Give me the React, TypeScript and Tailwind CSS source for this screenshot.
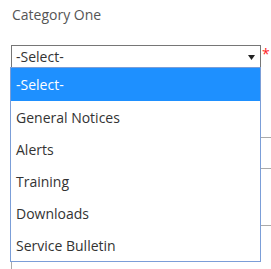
const options = [
  "-Select-",
  "General Notices",
  "Alerts",
  "Training",
  "Downloads",
  "Service Bulletin",
];

export default function App() {
  return (
    <div
      className="relative h-[269px] w-[271px] overflow-hidden bg-white text-[14px] text-[#333]"
      style={{ fontFamily: '"Open Sans", sans-serif' }}
    >
      {/* form behind the open list */}
      <div className="px-[12px] pt-[5px] leading-[20px] text-[#555]">Category One</div>
      <div className="ml-[11px] mt-[20px] flex w-[250px] items-center">
        <div className="flex h-[23px] w-[250px] shrink-0 items-center border border-[#767676] pl-[4px] pr-[5px] leading-[20px] text-[#333]">
          <span className="flex-1">-Select-</span>
          <svg width="7" height="5" viewBox="0 0 7 5" className="mt-[1px]">
            <path d="M0 0h7L3.5 5z" fill="#222" />
          </svg>
        </div>
        <span className="ml-[1px] mt-[-6px] text-[14px] leading-none text-[#f22]">*</span>
      </div>
      <div className="ml-[11px] mt-[69px] h-[32px] w-[300px] border border-[#aaa]" />
      <div className="ml-[11px] mt-[56px] h-[60px] w-[300px] border border-[#aaa]" />

      {/* open option list */}
      <ul className="absolute left-[10px] top-[67px] w-[251px] border border-[#7b9ed8] bg-white">
        {options.map((opt, i) => (
          <li
            key={opt}
            className={
              i === 0
                ? "flex h-[33px] items-center bg-[#1e90ff] pl-[5px] text-white"
                : "flex h-[32px] items-center pl-[5px] text-[#333]"
            }
          >
            {opt}
          </li>
        ))}
      </ul>
    </div>
  );
}
